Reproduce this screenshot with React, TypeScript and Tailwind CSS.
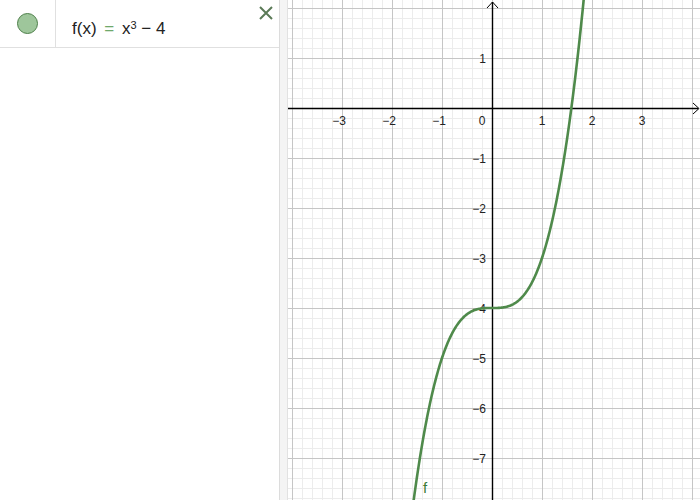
import React from "react"

const W = 412
const H = 500
const OX = 204
const OY = 108
const U = 50

function Graph() {
  const minor: number[] = []
  for (let x = OX % 10; x <= W; x += 10) minor.push(x)
  const minorY: number[] = []
  for (let y = OY % 10; y <= H; y += 10) minorY.push(y)
  const majorX: number[] = []
  for (let x = OX % U; x <= W; x += U) majorX.push(x)
  const majorY: number[] = []
  for (let y = OY % U; y <= H; y += U) majorY.push(y)

  const pts: string[] = []
  for (let t = -1.75; t <= 1.86; t += 0.01) {
    const px = OX + U * t
    const py = OY - U * (t * t * t - 4)
    pts.push(`${px.toFixed(2)},${py.toFixed(2)}`)
  }

  const xLabels = [-3, -2, -1, 1, 2, 3]
  const yLabels = [1, -1, -2, -3, -4, -5, -6, -7]

  return (
    <svg width={W} height={H} className="block">
      <rect width={W} height={H} fill="#ffffff" />
      {minor.map((x) => (
        <line key={"mx" + x} x1={x + 0.5} y1={0} x2={x + 0.5} y2={H} stroke="#ececec" strokeWidth={1} />
      ))}
      {minorY.map((y) => (
        <line key={"my" + y} x1={0} y1={y + 0.5} x2={W} y2={y + 0.5} stroke="#ececec" strokeWidth={1} />
      ))}
      {majorX.map((x) => (
        <line key={"Mx" + x} x1={x + 0.5} y1={0} x2={x + 0.5} y2={H} stroke="#c6c6c6" strokeWidth={1} />
      ))}
      {majorY.map((y) => (
        <line key={"My" + y} x1={0} y1={y + 0.5} x2={W} y2={y + 0.5} stroke="#c6c6c6" strokeWidth={1} />
      ))}
      <line x1={0} y1={OY + 0.5} x2={W - 2} y2={OY + 0.5} stroke="#000" strokeWidth={1.4} />
      <path d={`M${W - 7} ${OY - 5} L${W - 1} ${OY + 0.5} L${W - 7} ${OY + 6}`} fill="none" stroke="#000" strokeWidth={1} />
      <line x1={OX + 0.5} y1={2} x2={OX + 0.5} y2={H} stroke="#000" strokeWidth={1.4} />
      <path d={`M${OX - 5} ${8} L${OX + 0.5} ${2} L${OX + 6} ${8}`} fill="none" stroke="#000" strokeWidth={1} />
      <g fontFamily="'Liberation Sans', Arial, sans-serif" fontSize={12} fill="#222">
        {xLabels.map((v) => (
          <text key={"xl" + v} x={OX + v * U - (v < 0 ? 3 : 0)} y={OY + 17} textAnchor="middle">
            {v < 0 ? "\u2212" + Math.abs(v) : v}
          </text>
        ))}
        <text x={OX - 10} y={OY + 17} textAnchor="middle">0</text>
        {yLabels.map((v) => (
          <text key={"yl" + v} x={OX - 6} y={OY - v * U + 4.5} textAnchor="end">
            {v < 0 ? "\u2212" + Math.abs(v) : v}
          </text>
        ))}
      </g>
      <polyline points={pts.join(" ")} fill="none" stroke="#4f8a4b" strokeWidth={2.6} strokeLinejoin="round" />
      <text x={135} y={493} fontFamily="'Liberation Sans', Arial, sans-serif" fontSize={15} fill="#3a7a36">f</text>
    </svg>
  )
}

export default function App() {
  return (
    <div className="flex w-[700px] h-[500px] overflow-hidden bg-white font-['Liberation_Sans',Arial,sans-serif]">
      <div className="w-[280px] shrink-0 border-r border-[#dcdcdc] bg-white">
        <div className="flex h-[48px] border-b border-[#e0e0e0]">
          <div className="w-[56px] shrink-0 flex items-center justify-center border-r border-[#e0e0e0]">
            <div className="w-[21px] h-[21px] rounded-full bg-[#9ec69b] border border-[#4d7f49]" />
          </div>
          <div className="flex-1 relative">
            <div className="pl-[16px] pt-[20px] text-[17px] text-[#222] leading-none">
              f(x) <span className="text-[#6fa86b] mx-[3px]">=</span> x<sup className="text-[11px] relative -top-[5px]">3</sup> − 4
            </div>
            <svg className="absolute right-[6px] top-[6px]" width="14" height="14" viewBox="0 0 14 14">
              <path d="M1 1 L13 13 M13 1 L1 13" stroke="#5a7a56" strokeWidth="2" fill="none" />
            </svg>
          </div>
        </div>
      </div>
      <div className="w-[8px] shrink-0 bg-[#f4f4f4] border-r border-[#e2e2e2]" />
      <div className="flex-1">
        <Graph />
      </div>
    </div>
  )
}
